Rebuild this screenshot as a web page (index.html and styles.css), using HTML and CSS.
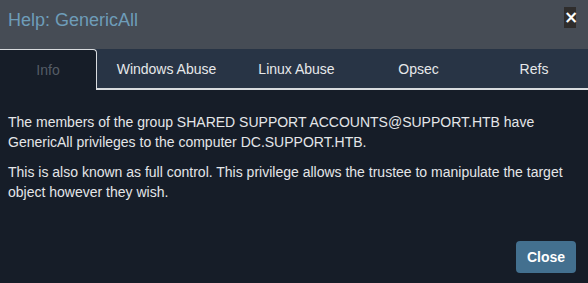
FILE: index.html
```html
<!DOCTYPE html>
<html lang="en">
<head>
  <meta charset="UTF-8" />
  <title>Help: GenericAll</title>
  <link rel="stylesheet" href="styles.css">
</head>
<body>
  <div class="modal">
    <div class="modal-header">
      <h4 class="modal-title">Help: GenericAll</h4>
      <button class="close-x">&times;</button>
    </div>

    <ul class="tabs">
      <li class="tab active">Info</li>
      <li class="tab">Windows Abuse</li>
      <li class="tab">Linux Abuse</li>
      <li class="tab">Opsec</li>
      <li class="tab">Refs</li>
    </ul>

    <div class="modal-body">
      <p>The members of the group SHARED SUPPORT ACCOUNTS@SUPPORT.HTB have GenericAll privileges to the computer DC.SUPPORT.HTB.</p>
      <p>This is also known as full control. This privilege allows the trustee to manipulate the target object however they wish.</p>
    </div>

    <div class="modal-footer">
      <button class="btn-close">Close</button>
    </div>
  </div>
</body>
</html>
```

FILE: styles.css
```css
body {
  margin: 0;
  font-family: "Liberation Sans", Arial, sans-serif;
  background-color: #161d28;
}

.modal {
  width: 588px;
  height: 283px;
  display: flex;
  flex-direction: column;
  background-color: #161d28;
}

.modal-header {
  height: 49px;
  background-color: #464c55;
  display: flex;
  justify-content: space-between;
  align-items: flex-start;
  padding: 0 12px 0 8px;
  box-sizing: border-box;
}

.modal-title {
  margin: 10px 0 0;
  font-size: 18px;
  font-weight: normal;
  color: #6e9db9;
}

.close-x {
  margin-top: 7px;
  width: 12px;
  height: 21px;
  padding: 0;
  border: none;
  background-color: #2f2d2c;
  color: #fff;
  font-family: "DejaVu Sans", sans-serif;
  font-size: 17px;
  font-weight: bold;
  line-height: 21px;
  cursor: pointer;
}

.tabs {
  list-style: none;
  margin: 0;
  padding: 0;
  height: 41px;
  display: grid;
  grid-template-columns: 97px 139px 121px 123px 1fr;
  background-color: #283445;
}

.tab {
  display: flex;
  align-items: center;
  justify-content: center;
  font-size: 14px;
  color: #e6e8ea;
  border-bottom: 2px solid #d9dcdf;
  box-sizing: border-box;
}

.tab.active {
  color: #555c66;
  background-color: #161d28;
  border: 1px solid #d9dcdf;
  border-left: none;
  border-bottom: none;
  border-top-right-radius: 4px;
}

.modal-body {
  flex: 1;
  padding: 22px 8px 0;
  color: #e4e6e8;
  font-size: 14px;
  line-height: 20px;
}

.modal-body p {
  margin: 0 0 10px;
}

.modal-footer {
  display: flex;
  justify-content: flex-end;
  padding: 0 12px 10px;
}

.btn-close {
  width: 60px;
  height: 32px;
  border: none;
  border-radius: 4px;
  background-color: #43708f;
  color: #fff;
  font-family: "Liberation Sans", Arial, sans-serif;
  font-size: 14px;
  font-weight: bold;
  cursor: pointer;
}
```
